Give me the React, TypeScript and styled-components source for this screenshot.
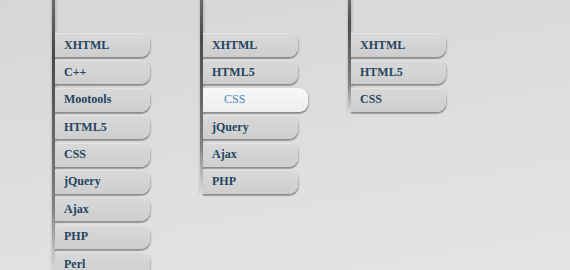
import React from 'react';
import styled, { createGlobalStyle } from 'styled-components';

const GlobalStyle = createGlobalStyle`
  html, body {
    margin: 0;
    padding: 0;
  }
  body {
    width: 570px;
    height: 270px;
    overflow: hidden;
    background: linear-gradient(170deg, #d6d6d6 0%, #dddddd 45%, #e4e4e4 100%);
  }
`;

const Page = styled.div`
  display: flex;
  align-items: flex-start;
  height: 270px;
  padding-left: 52px;
  box-sizing: border-box;
  overflow: hidden;
`;

const Column = styled.div`
  display: flex;
  width: 148px;
  padding-bottom: 32px;
`;

const Rule = styled.div`
  flex: none;
  width: 3px;
  background: linear-gradient(
    to bottom,
    rgba(60, 60, 60, 0.7) 0%,
    rgba(50, 50, 50, 0.85) 20%,
    rgba(80, 80, 80, 0.65) 75%,
    rgba(120, 120, 120, 0) 100%
  );
  box-shadow: 1px 0 3px rgba(0, 0, 0, 0.18), -1px 0 2px rgba(0, 0, 0, 0.08);
`;

const List = styled.ul`
  list-style: none;
  margin: 0;
  padding: 33px 0 0;
  display: flex;
  flex-direction: column;
  gap: 3.4px;
`;

const Item = styled.li<{ $active?: boolean }>`
  box-sizing: border-box;
  width: ${(p) => (p.$active ? 105 : 95)}px;
  height: 24px;
  padding-left: ${(p) => (p.$active ? 21 : 9)}px;
  display: flex;
  align-items: center;
  border-radius: 0 9px 9px 0;
  background: ${(p) =>
    p.$active
      ? 'linear-gradient(to bottom, #f8f8f8, #eeeeee)'
      : 'linear-gradient(to bottom, #d9d9d9, #cecece)'};
  box-shadow: 0 2px 1px rgba(0, 0, 0, 0.25), 1px 1px 2px rgba(0, 0, 0, 0.2),
    inset 0 1px 0 rgba(255, 255, 255, 0.3);
  font-family: 'Liberation Serif', 'DejaVu Serif', serif;
  font-size: 12px;
  font-weight: ${(p) => (p.$active ? 400 : 700)};
  color: ${(p) => (p.$active ? '#4a8cc2' : '#24455f')};
  cursor: pointer;
`;

const columns: { items: string[]; active?: string }[] = [
  { items: ['XHTML', 'C++', 'Mootools', 'HTML5', 'CSS', 'jQuery', 'Ajax', 'PHP', 'Perl'] },
  { items: ['XHTML', 'HTML5', 'CSS', 'jQuery', 'Ajax', 'PHP'], active: 'CSS' },
  { items: ['XHTML', 'HTML5', 'CSS'] },
];

export default function App() {
  return (
    <>
      <GlobalStyle />
      <Page>
        {columns.map((col, i) => (
          <Column key={i}>
            <Rule />
            <List>
              {col.items.map((name) => (
                <Item key={name} $active={name === col.active}>
                  {name}
                </Item>
              ))}
            </List>
          </Column>
        ))}
      </Page>
    </>
  );
}
